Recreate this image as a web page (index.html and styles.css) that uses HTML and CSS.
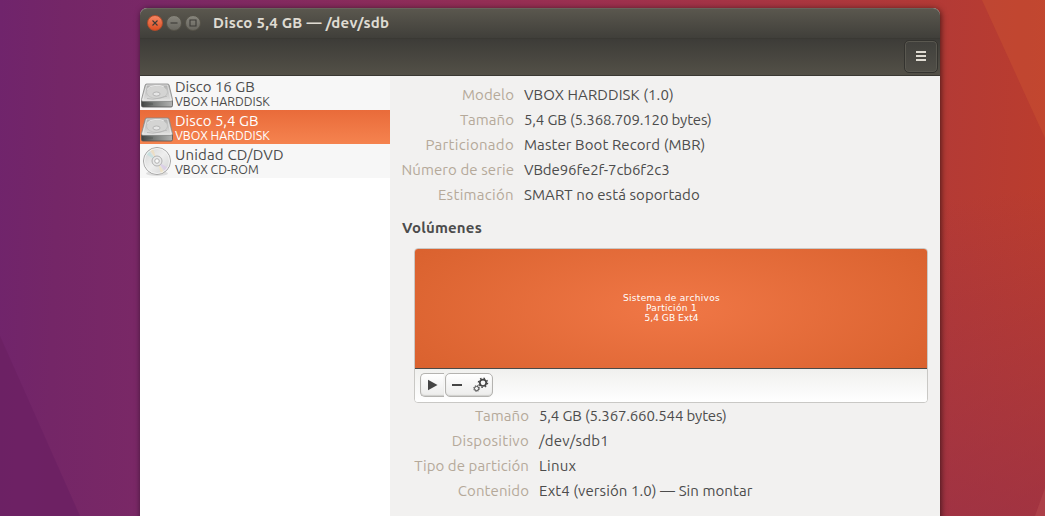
FILE: index.html
```html
<!DOCTYPE html>
<html lang="es">
<head>
<meta charset="utf-8">
<title>Disco 5,4 GB — /dev/sdb</title>
<link rel="stylesheet" href="styles.css">
</head>
<body>
<svg class="defs" width="0" height="0" aria-hidden="true">
  <defs>
    <linearGradient id="top" x1="0" y1="0" x2="0" y2="1"><stop offset="0" stop-color="#adadad"/><stop offset="1" stop-color="#e2e2e1"/></linearGradient>
    <linearGradient id="front" x1="0" y1="0" x2="1" y2="0"><stop offset="0" stop-color="#3f4240"/><stop offset=".4" stop-color="#777a78"/><stop offset="1" stop-color="#b2b3b2"/></linearGradient>
    <linearGradient id="cd" x1="0" y1="0" x2="1" y2="1"><stop offset="0" stop-color="#d2d2d2"/><stop offset=".5" stop-color="#eeeeee"/><stop offset="1" stop-color="#cfcfcf"/></linearGradient>
    <symbol id="hdd" viewBox="0 0 34 34">
      <path d="M1.500 24.500h31v5q0 1.500-1.500 1.500h-28q-1.500 0-1.500-1.500z" fill="url(#front)" stroke="#555" stroke-width=".8"/>
      <path d="M6.600 8h21q1.200 0 1.500 1L32.500 23.500q.300 1.800-1.300 1.800H2.700Q1.200 25.300 1.500 23.500L5.200 9q.300-1 1.400-1z" fill="url(#top)" stroke="#858685" stroke-width=".8"/>
      <path d="M6.700 9h20.800l3.600 15.200H2.700z" fill="none" stroke="#f4f4f4" stroke-width=".6"/>
      <ellipse cx="17" cy="16" rx="10.500" ry="6.500" fill="#d4d4d3" stroke="#bdbebd" stroke-width=".7"/>
      <ellipse cx="16.500" cy="18" rx="3.600" ry="2" fill="#e6e6e6" stroke="#a3a4a3" stroke-width=".7"/>
      <path d="M7 13.500q2-3.500 8-4t9 1.500" fill="none" stroke="#ededed" stroke-width=".9"/>
      <path d="M7 22.500q6 1.500 12-.3t8-2" fill="none" stroke="#b4b4b4" stroke-width=".8"/>
      <path d="M4 28h9" stroke="#525553" stroke-width=".8"/>
    </symbol>
  </defs>
</svg>
<div class="desktop">
  <svg class="wallpaper" viewBox="0 0 1045 516" aria-hidden="true">
    <path d="M0 336L80 516H0z" fill="#6c2063" opacity=".8"/>
    <path d="M982 0h63v138z" fill="#cc5532" opacity=".42"/>
    <path d="M1045 488v28h-10z" fill="#b84c50" opacity=".5"/>
  </svg>
  <main class="window">
    <header class="titlebar">
      <span class="ctl close"><svg viewBox="0 0 16 16"><path d="M5.500 5.500l5 5m0-5l-5 5"/></svg></span>
      <span class="ctl"><svg viewBox="0 0 16 16"><path d="M4.500 8h7"/></svg></span>
      <span class="ctl"><svg viewBox="0 0 16 16"><path d="M5 5h6v6H5z"/></svg></span>
      <h1 class="title">Disco 5,4 GB — /dev/sdb</h1>
    </header>
    <div class="toolbar">
      <button class="menu" aria-label="Menú"><svg width="10" height="10"><path d="M0 0h10v2H0zM0 4h10v2H0zM0 8h10v2H0z"/></svg></button>
    </div>
    <div class="body">
      <aside class="devices">
        <div class="device">
          <svg class="icon"><use href="#hdd"/></svg>
          <div class="names"><span class="name">Disco 16 GB</span><span class="model">VBOX HARDDISK</span></div>
        </div>
        <div class="device selected">
          <svg class="icon"><use href="#hdd"/></svg>
          <div class="names"><span class="name">Disco 5,4 GB</span><span class="model">VBOX HARDDISK</span></div>
        </div>
        <div class="device">
          <svg class="icon" viewBox="0 0 34 34">
            <ellipse cx="17" cy="29.500" rx="11" ry="2.500" fill="#000" opacity=".1"/>
            <circle cx="17" cy="17" r="13.500" fill="url(#cd)" stroke="#a6a6a6"/>
            <path d="M17 17L6 10l3-3z" fill="#b9dfe0" opacity=".6"/>
            <path d="M17 17l-7-11 3-1.500z" fill="#f1ddb8" opacity=".7"/>
            <path d="M17 17l11 7-3 3z" fill="#d9c9e8" opacity=".7"/>
            <path d="M17 17l7 11-3 1.500z" fill="#f2e3bd" opacity=".7"/>
            <circle cx="17" cy="17" r="12.500" fill="none" stroke="#f8f8f8" stroke-width=".8"/>
            <circle cx="17" cy="17" r="5" fill="#e9e9e9" stroke="#aaa" stroke-width=".9"/>
            <circle cx="17" cy="17" r="2.300" fill="#fafafa" stroke="#aaa" stroke-width=".9"/>
          </svg>
          <div class="names"><span class="name wide">Unidad CD/DVD</span><span class="model">VBOX CD-ROM</span></div>
        </div>
      </aside>
      <section class="details">
        <dl class="props drive">
          <dt>Modelo</dt><dd>VBOX HARDDISK (1.0)</dd>
          <dt>Tamaño</dt><dd class="size">5,4 GB (5.368.709.120 bytes)</dd>
          <dt class="loose">Particionado</dt><dd>Master Boot Record (MBR)</dd>
          <dt>Número de serie</dt><dd class="serial">VBde96fe2f-7cb6f2c3</dd>
          <dt class="loose">Estimación</dt><dd>SMART no está soportado</dd>
        </dl>
        <h2 class="heading">Volúmenes</h2>
        <div class="volumes">
          <div class="partition"><span>Sistema de archivos</span><span>Partición 1</span><span class="tight">5,4 GB Ext4</span></div>
          <div class="actions">
            <button class="act play" aria-label="Montar"><svg width="10" height="12"><path d="M0 .800L9.500 6 0 11.200z"/></svg></button>
            <div class="act group">
              <svg width="10" height="2"><path d="M0 0h10v2H0z"/></svg>
              <svg width="16" height="16" viewBox="0 0 16 16" class="gears">
                <circle cx="10" cy="5.800" r="3.200" stroke-width="1.700"/>
                <circle cx="10" cy="5.800" r="4.600" stroke-width="1.300" stroke-dasharray="1.500 2.113"/>
                <circle cx="3.600" cy="11.500" r="2.100" stroke-width="1"/>
                <circle cx="3.600" cy="11.500" r="3" stroke-width=".9" stroke-dasharray="1.100 1.256"/>
              </svg>
            </div>
          </div>
        </div>
        <dl class="props volume">
          <dt>Tamaño</dt><dd class="size">5,4 GB (5.367.660.544 bytes)</dd>
          <dt class="loose">Dispositivo</dt><dd class="loose">/dev/sdb1</dd>
          <dt>Tipo de partición</dt><dd class="loose">Linux</dd>
          <dt>Contenido</dt><dd>Ext4 (versión 1.0) — Sin montar</dd>
        </dl>
      </section>
    </div>
  </main>
</div>
</body>
</html>
```
FILE: styles.css
```css
* { box-sizing: border-box; }
body { margin: 0; overflow: hidden; font-family: Ubuntu, "Noto Sans", sans-serif; color: #4c4c4c; }
.defs { position: absolute; }
.desktop {
  position: relative; width: 1045px; height: 516px; padding: 8px 105px 0 140px; overflow: hidden;
  background: linear-gradient(92deg, #70246c 0%, #742667 6%, #7a2866 15%, #9c3050 55%, #b33a36 88%, #bb3d2d 100%);
}
.desktop::before {
  content: ""; position: absolute; inset: 0 0 0 800px;
  background: linear-gradient(172deg, transparent 40%, rgba(145, 45, 78, .6) 100%);
}
.wallpaper { position: absolute; inset: 0; width: 1045px; height: 516px; }
.window {
  position: relative; width: 800px; height: 520px; display: flex; flex-direction: column;
  border-radius: 7px 7px 0 0; background: #f2f1f0; box-shadow: 1px 1px 6px rgba(0, 0, 0, .6);
}
.titlebar {
  height: 30px; flex: none; display: flex; align-items: center; gap: 3px; padding: 0 7px 2px;
  border-radius: 7px 7px 0 0; border-top: 1px solid #67645c;
  background: linear-gradient(#5a574e, #403f3a);
}
.ctl {
  width: 16px; height: 16px; border-radius: 50%; border: 1px solid #565349;
  background: linear-gradient(#89877e, #66645d) border-box; display: flex;
}
.ctl svg { width: 16px; height: 16px; margin: -1px; flex: none; fill: none; stroke: #3c3b37; stroke-width: 1.1; }
.close { background: linear-gradient(#f68a68, #dc4a1d) border-box; border-color: #b34c2b; }
.title { margin: 0 0 0 9px; font-size: 15px; line-height: 20px; font-weight: 700; color: #dfdbd2; white-space: nowrap; letter-spacing: .27px; }
.toolbar {
  height: 38px; flex: none; display: flex; justify-content: flex-end; padding: 1px 2px 0;
  border-top: 1px solid #3a3934; border-bottom: 1px solid #3a3833;
  background: linear-gradient(#3d3c38, #535047);
}
.menu {
  width: 34px; height: 33px; padding: 0; border: 1px solid #34332f; border-radius: 5px;
  background: linear-gradient(#41403c, #504e47); box-shadow: inset 0 0 0 1px #5a5850;
  display: flex; align-items: center; justify-content: center;
}
.menu svg { fill: #dfdbd2; margin-bottom: 1px; }
.body { flex: 1; display: flex; }
.devices { width: 250px; flex: none; background: #fff; }
.device { height: 34px; display: flex; gap: 1px; background: #f7f7f7; }
.selected { background: linear-gradient(#e96b3a, #f5834f); color: #fff; }
.icon { width: 34px; height: 34px; flex: none; }
.names { display: flex; flex-direction: column; white-space: nowrap; }
.name { font-size: 15px; line-height: 18px; height: 18px; padding-top: 2px; }
.wide { letter-spacing: .18px; }
.model { font-size: 12.4px; line-height: 14px; }
.details { flex: 1; padding: 6px 12px; background: #f2f1f0; }
.props { margin: 0; display: grid; grid-template-columns: 112px 1fr; column-gap: 10px; grid-auto-rows: 25px; font-size: 15px; line-height: 25px; letter-spacing: .08px; white-space: nowrap; }
.props dt { justify-self: end; color: #b5a99a; }
.props dd { margin: 0; justify-self: start; }
.props .size { letter-spacing: -.15px; }
.props .serial { letter-spacing: -.1px; }
.props .loose { letter-spacing: .3px; }
.heading { margin: 8px 0 0; font-size: 15px; line-height: 25px; font-weight: 700; letter-spacing: .2px; }
.volumes { margin: 8px 0 0 12px; width: 514px; height: 155px; border: 1px solid #c9c8c5; border-radius: 4px; overflow: hidden; background: #fff; }
.partition {
  height: 120px; padding: 0 0 2px 1px; border-bottom: 1px solid #4a4a48; color: #fff;
  background: radial-gradient(ellipse 300px 105px at 50% 50%, #f07746, #da622f);
  display: flex; flex-direction: column; align-items: center; justify-content: center;
  font: 9px/10px "DejaVu Sans", sans-serif; letter-spacing: .32px;
}
.tight { letter-spacing: .05px; }
.actions { height: 33px; display: flex; gap: 1px; padding: 4px 5px; background: linear-gradient(#f0f0ee, #fff); }
.act { height: 24px; border: 1px solid #b4b3b0; background: linear-gradient(#fff, #ececeb); box-shadow: inset 0 -1px 1px #d0d0ce; display: flex; align-items: center; fill: #454545; }
.play { width: 24px; padding: 0 0 0 7px; border-right: 0; border-radius: 5px 0 0 5px; }
.group { width: 48px; padding: 0 3px 0 6px; justify-content: space-between; border-radius: 5px; }
.gears { fill: none; stroke: #454545; }
.volume { margin-left: 12px; grid-template-columns: 115px 1fr; }
```
